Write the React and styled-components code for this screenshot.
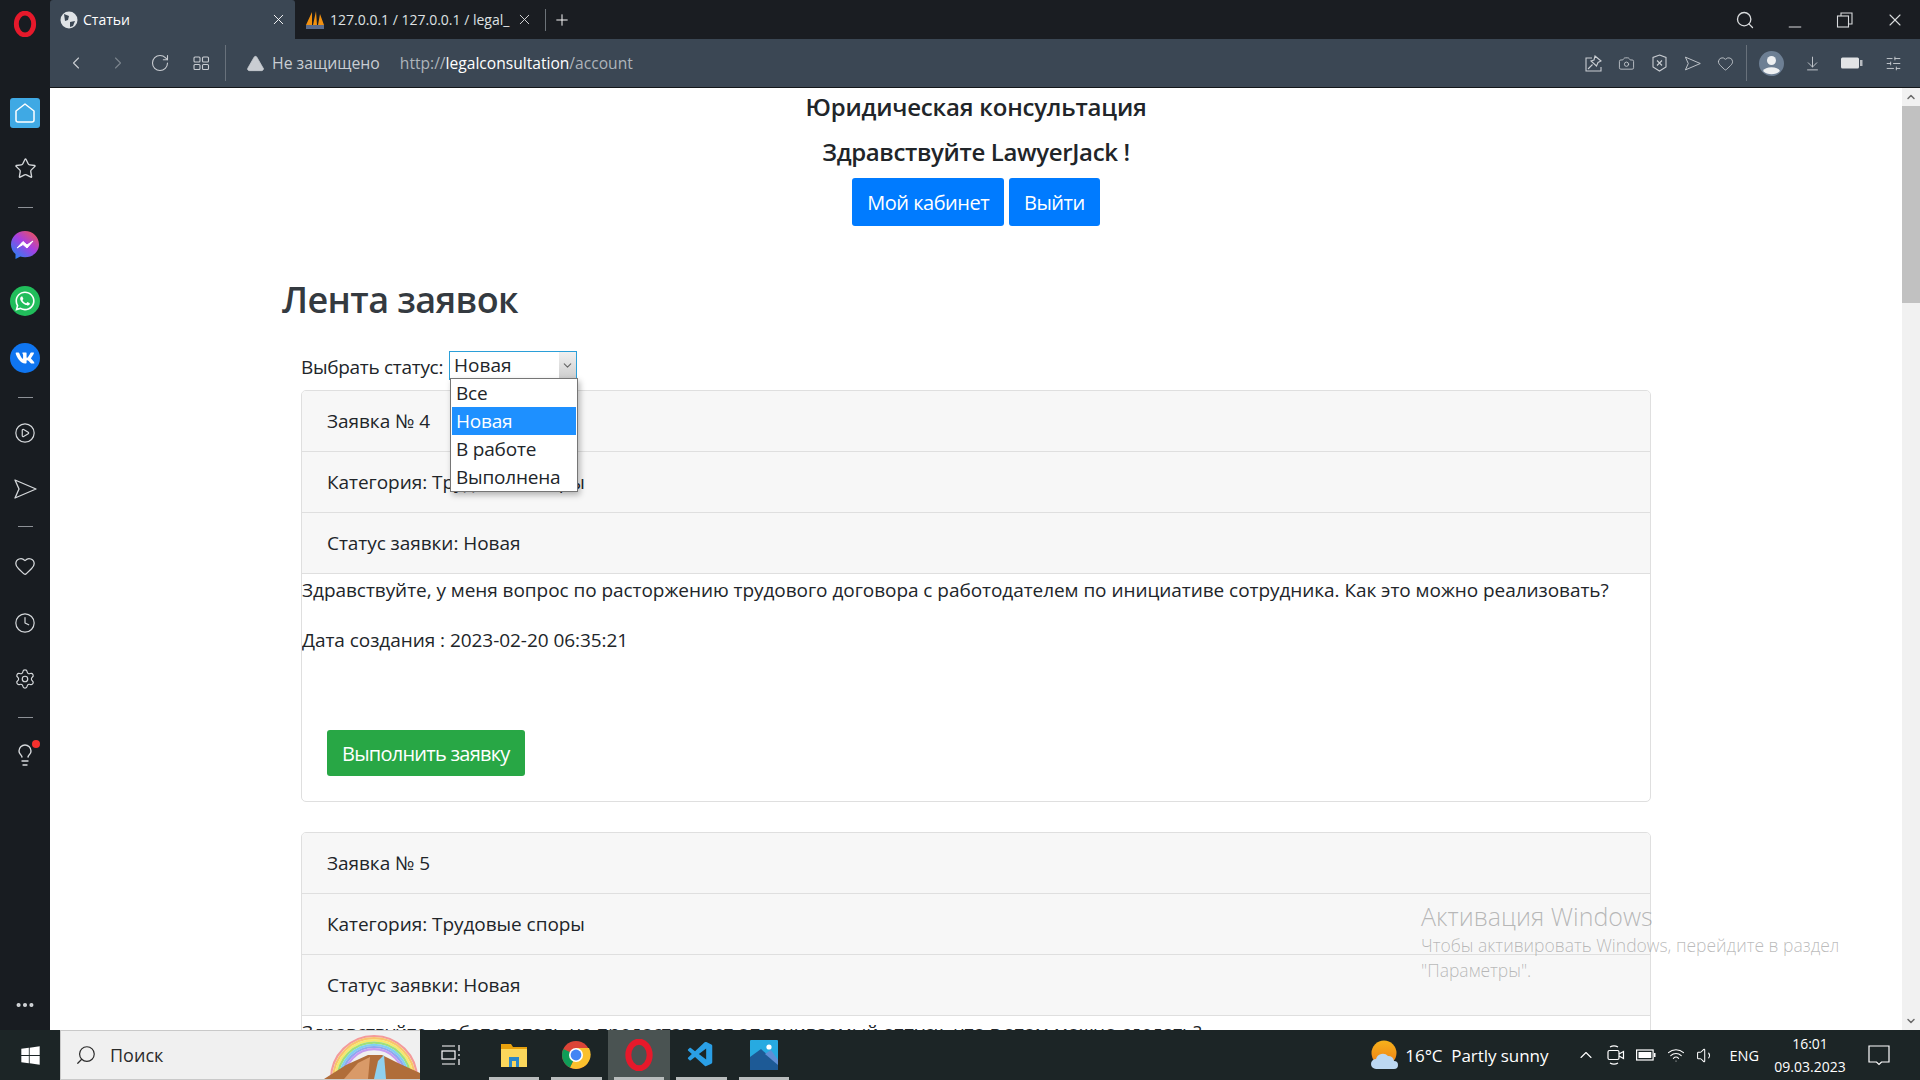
import { createGlobalStyle, styled } from 'styled-components';
import {
  ArrowDownToLine, Camera, ChevronDown, ChevronLeft, ChevronRight, ChevronUp, CirclePlay, Clock, Heart,
  Lightbulb, RotateCw, Search, Settings, SlidersHorizontal, Star, TriangleAlert, Volume1, Wifi, X, Plus,
  Minus, MoreHorizontal,
} from 'lucide-react';
import { FaVk, FaWhatsapp, FaWindows } from 'react-icons/fa';
import { VscVscode } from 'react-icons/vsc';

const GlobalStyle = createGlobalStyle`
  html, body { margin: 0; height: 100%; overflow: hidden; background: #fff; }
  * { box-sizing: border-box; }
  body { font-family: "Open Sans", "Noto Sans", "Liberation Sans", sans-serif; color: #212529; }
`;

const Screen = styled.div`
  width: 1920px;
  height: 1080px;
  display: flex;
  flex-direction: column;
  position: relative;
  overflow: hidden;
`;

const Browser = styled.div`
  height: 1030px;
  display: flex;
`;

const Sidebar = styled.aside`
  width: 50px;
  background: #181c21;
  display: flex;
  flex-direction: column;
  align-items: center;
  color: #d5d8db;
  padding-top: 11px;
`;

const SideItem = styled.div`
  width: 30px;
  height: 30px;
  margin-top: ${(p) => p.$top || 26}px;
  display: flex;
  align-items: center;
  justify-content: center;
  border-radius: ${(p) => (p.$round ? '50%' : '3px')};
  background: ${(p) => p.$bg || 'transparent'};
  color: ${(p) => p.$color || '#d5d8db'};
  position: relative;
`;

const SideRule = styled.div`
  width: 15px;
  height: 1px;
  background: #8d9197;
  margin-top: ${(p) => p.$top || 20}px;
`;

const Dot = styled.span`
  position: absolute;
  top: 0;
  right: 0;
  width: 8px;
  height: 8px;
  border-radius: 50%;
  background: #f6302d;
`;

const Main = styled.div`
  flex: 1;
  min-width: 0;
  display: flex;
  flex-direction: column;
`;

const TabStrip = styled.div`
  height: 39px;
  background: #1a1d22;
  display: flex;
  align-items: center;
  color: #fff;
`;

const Tab = styled.div`
  width: ${(p) => (p.$active ? 245 : 250)}px;
  height: 39px;
  display: flex;
  align-items: center;
  gap: 5px;
  padding: 0 ${(p) => (p.$active ? 8 : 12)}px 0 10px;
  font-size: 14px;
  white-space: nowrap;
  background: ${(p) => (p.$active ? '#3b4754' : 'transparent')};
  color: ${(p) => (p.$active ? '#fff' : '#dfe1e3')};
  border-radius: ${(p) => (p.$active ? '3px 3px 0 0' : '0')};
`;

const TabTitle = styled.span`
  flex: 1;
  min-width: 0;
  overflow: hidden;
`;

const NewTab = styled.div`
  height: 22px;
  border-left: 1px solid #6c7278;
  padding-left: 7px;
  display: flex;
  align-items: center;
`;

const WindowControls = styled.div`
  margin-left: auto;
  display: flex;
  align-items: center;
  gap: 30px;
  padding-right: 15px;
  color: #d9dbdd;
`;

const Toolbar = styled.div`
  height: 49px;
  background: #3b4754;
  border-bottom: 1px solid #14171a;
  display: flex;
  align-items: center;
  padding: 0 18px 0 16px;
  color: #c9cdd2;
`;

const NavGroup = styled.div`
  display: flex;
  align-items: center;
  gap: 22px;
  padding-right: 15px;
  height: 36px;
  border-right: 1px solid #68717b;
`;

const Security = styled.div`
  display: flex;
  align-items: center;
  gap: 7px;
  margin-left: 20px;
  font-size: 15.8px;
  color: #c9cdd2;
`;

const Url = styled.div`
  margin-left: 20px;
  font-size: 15.6px;
  color: #aeb4ba;
  b { font-weight: 400; color: #fff; }
`;

const ToolIcons = styled.div`
  margin-left: auto;
  display: flex;
  align-items: center;
  gap: 16px;
`;

const ToolRule = styled.div`
  width: 1px;
  height: 36px;
  margin: 0 -4px;
  background: #68717b;
`;

const AvatarWrap = styled.div`
  margin-right: 4px;
  display: flex;
`;

const BatteryWrap = styled.div`
  margin: 0 6px 0 4px;
  display: flex;
`;

const Viewport = styled.div`
  flex: 1;
  min-height: 0;
  display: flex;
`;

const Page = styled.main`
  flex: 1;
  min-width: 0;
  overflow: hidden;
  background: #fff;
  position: relative;
`;

const Masthead = styled.header`
  display: flex;
  flex-direction: column;
  align-items: center;
`;

const SiteTitle = styled.h4`
  margin: 0;
  height: 38px;
  line-height: 38px;
  font-size: 24px;
  font-weight: 600;
  letter-spacing: -0.2px;
`;

const Greeting = styled(SiteTitle)`
  margin-top: 7px;
  letter-spacing: -0.35px;
`;

const ButtonRow = styled.div`
  display: flex;
  gap: 5px;
  margin-top: 7px;
`;

const Btn = styled.div`
  height: ${(p) => (p.$green ? 46 : 48)}px;
  padding: 0 15px;
  display: flex;
  align-items: center;
  border-radius: 3px;
  font-size: 20px;
  letter-spacing: ${(p) => (p.$green ? -0.75 : -0.5)}px;
  color: #fff;
  background: ${(p) => (p.$green ? '#28a745' : '#007bff')};
  width: fit-content;
`;

const Content = styled.div`
  margin-left: 232px;
  width: 1368px;
`;

const PageTitle = styled.h2`
  margin: 46px 0 0;
  height: 56px;
  line-height: 56px;
  font-size: 36px;
  font-weight: 600;
  color: #343a40;
  letter-spacing: -0.6px;
`;

const Feed = styled.div`
  margin-left: 19px;
`;

const Filter = styled.div`
  margin-top: 22px;
  height: 34px;
  display: flex;
  align-items: center;
  gap: 6px;
  font-size: 19px;
  letter-spacing: -0.3px;
  position: relative;
`;

const SelectBox = styled.div`
  width: 128px;
  height: 29px;
  border: 1px solid #2b9fd8;
  display: flex;
  align-items: center;
  justify-content: space-between;
  padding-left: 4px;
  font-size: 19px;
  letter-spacing: 0;
  margin-top: -4px;
`;

const SelectArrow = styled.div`
  width: 17px;
  height: 27px;
  background: linear-gradient(#f0f0f0, #cdcdcd);
  color: #666;
  display: flex;
  align-items: center;
  justify-content: center;
`;

const Dropdown = styled.ul`
  position: absolute;
  z-index: 3;
  left: 149px;
  top: 28px;
  width: 128px;
  margin: 0;
  padding: 0 1px;
  list-style: none;
  background: #fff;
  border: 1px solid #767676;
  box-shadow: 2px 3px 6px rgba(0, 0, 0, 0.28);
`;

const Option = styled.li`
  height: 28px;
  line-height: 28px;
  padding-left: 4px;
  font-size: 19px;
  letter-spacing: -0.2px;
  background: ${(p) => (p.$selected ? '#1e90ff' : 'transparent')};
  color: ${(p) => (p.$selected ? '#fff' : '#212529')};
`;

const Card = styled.section`
  width: 1350px;
  height: 412px;
  margin-top: ${(p) => p.$top}px;
  border: 1px solid #dfdfdf;
  border-radius: 5px;
  overflow: hidden;
`;

const CardHeader = styled.div`
  height: 61px;
  padding: 0 25px;
  display: flex;
  align-items: center;
  background: #f7f7f7;
  border-bottom: 1px solid #dfdfdf;
  font-size: 19px;
  letter-spacing: -0.05px;
`;

const CardText = styled.p`
  margin: ${(p) => p.$top || 0}px 0 0;
  height: 30px;
  line-height: 30px;
  font-size: 19px;
  letter-spacing: -0.05px;
`;

const CardAction = styled.div`
  margin: 75px 0 0 25px;
`;

const Activation = styled.div`
  position: absolute;
  z-index: 4;
  left: 1371px;
  top: 811px;
  color: rgba(120, 120, 120, 0.5);
  font-size: 17.5px;
  line-height: 25px;
  font-weight: 300;
  white-space: nowrap;
  h5 {
    margin: 0;
    font-size: 25px;
    line-height: 34px;
    font-weight: 300;
  }
`;

const Scrollbar = styled.div`
  width: 18px;
  background: #f1f1f1;
  display: flex;
  flex-direction: column;
  align-items: center;
  color: #6b6b6b;
`;

const ScrollThumb = styled.div`
  width: 100%;
  height: 197px;
  background: #c1c1c1;
`;

const ScrollArrow = styled.div`
  height: 18px;
  display: flex;
  align-items: center;
  margin-top: ${(p) => (p.$end ? 'auto' : '0')};
`;

const Taskbar = styled.footer`
  height: 50px;
  background: #1c2526;
  display: flex;
  align-items: center;
  color: #fff;
`;

const StartBtn = styled.div`
  width: 60px;
  display: flex;
  justify-content: center;
`;

const SearchBox = styled.div`
  width: 360px;
  height: 50px;
  background: #f0f0f0;
  border: 1px solid #c9c9c9;
  border-right: 0;
  color: #2b2b2b;
  display: flex;
  align-items: center;
  gap: 13px;
  padding-left: 14px;
  font-size: 18px;
  position: relative;
  overflow: hidden;
`;

const SearchArt = styled.svg`
  position: absolute;
  right: 0;
  bottom: 0;
`;

const TaskIcons = styled.div`
  display: flex;
`;

const TaskIcon = styled.div`
  width: 62.5px;
  height: 50px;
  display: flex;
  align-items: center;
  justify-content: center;
  position: relative;
  background: ${(p) => (p.$active ? '#4a5352' : 'transparent')};
  &::after {
    content: '';
    display: ${(p) => (p.$running ? 'block' : 'none')};
    position: absolute;
    left: 6px;
    right: 6px;
    bottom: 0;
    height: 3px;
    background: #b9bdbd;
  }
`;

const Tray = styled.div`
  margin-left: auto;
  display: flex;
  align-items: center;
  height: 100%;
  padding-right: 11px;
`;

const Weather = styled.div`
  display: flex;
  align-items: center;
  gap: 6px;
  font-size: 17px;
  margin-right: 28px;
  letter-spacing: -0.05px;
  white-space: pre;
`;

const TrayIcons = styled.div`
  display: flex;
  align-items: center;
  gap: 11px;
`;

const Lang = styled.span`
  font-size: 14.5px;
  margin-left: 14px;
`;

const Clockface = styled.div`
  width: 76px;
  margin-left: 13px;
  text-align: center;
  font-size: 14px;
  line-height: 23px;
`;

const Notify = styled.div`
  width: 61px;
  height: 100%;
  display: flex;
  align-items: center;
  justify-content: center;
`;

const OperaLogo = ({ size = 24 }) => (
  <svg width={size} height={size} viewBox="0 0 24 24">
    <ellipse cx="12" cy="12" rx="8" ry="10" fill="none" stroke="#e6192b" strokeWidth="4.5" />
  </svg>
);

const MessengerLogo = () => (
  <svg width="30" height="30" viewBox="0 0 30 30">
    <defs>
      <linearGradient id="messenger" x1="0.9" y1="0" x2="0.1" y2="1">
        <stop offset="0" stopColor="#f2554f" />
        <stop offset="0.45" stopColor="#a83ee0" />
        <stop offset="1" stopColor="#1e86f5" />
      </linearGradient>
    </defs>
    <path d="M15 1 C7 1 1 7 1 14.5 C1 18.5 2.8 21.8 5.5 24 V29 L10.3 26.5 C11.8 27 13.4 27.3 15 27.3 C23 27.3 29 21.6 29 14.5 C29 7 23 1 15 1 Z" fill="url(#messenger)" />
    <path d="M7 18 L13 11.5 L17 15 L23 11 L17 18 L13 14.5 Z" fill="#fff" stroke="#fff" strokeWidth="1" strokeLinejoin="round" />
  </svg>
);

const ChromeLogo = () => (
  <svg width="30" height="30" viewBox="0 0 30 30">
    <circle cx="15" cy="15" r="14" fill="#db4437" />
    <path d="M15 15 L27 22 A14 14 0 0 1 9 27.6 Z" fill="#fbc02d" />
    <path d="M15 15 L9 27.6 A14 14 0 0 1 2.4 9 Z" fill="#0f9d58" />
    <path d="M15 8 H28 A14 14 0 0 1 22 27 L15 15 Z" fill="#fbc02d" />
    <circle cx="15" cy="15" r="7" fill="#fff" />
    <circle cx="15" cy="15" r="5.4" fill="#4285f4" />
  </svg>
);

const FolderLogo = () => (
  <svg width="30" height="30" viewBox="0 0 30 30">
    <path d="M2 4 H12 L14 7 H28 V27 H2 Z" fill="#e8a10c" />
    <rect x="2" y="9" width="26" height="18" fill="#fbd75b" />
    <path d="M10 17 H20 V27 H17 V21 H13 V27 H10 Z" fill="#2b87c8" />
  </svg>
);

const PhotosLogo = () => (
  <svg width="28" height="30" viewBox="0 0 28 30">
    <rect width="28" height="30" rx="1" fill="#27aae1" />
    <circle cx="19" cy="7" r="2.6" fill="#fff" />
    <path d="M0 30 V17 L11 9 L28 24 V30 Z" fill="#1d5a96" />
    <path d="M15 14 L21 10 L28 20 V25 Z" fill="#5f8fd6" />
  </svg>
);

const WeatherLogo = () => (
  <svg width="28" height="30" viewBox="0 0 28 30">
    <defs>
      <linearGradient id="sun" x1="0" y1="0" x2="0" y2="1">
        <stop offset="0" stopColor="#f6b21b" />
        <stop offset="1" stopColor="#ef7d16" />
      </linearGradient>
    </defs>
    <circle cx="13" cy="13" r="12.5" fill="url(#sun)" />
    <path d="M5 29 a5 5 0 0 1 0-10 a7 7 0 0 1 12-3 a6 6 0 0 1 6 5 a4 4 0 0 1 0 8 Z" fill="#bcd8f2" />
  </svg>
);

const PmaLogo = () => (
  <svg width="20" height="20" viewBox="0 0 20 20">
    <path d="M1 15 L7 2 L7 15 Z M8 15 L11 1 L12 15 Z M13 15 L15 4 L19 15 Z" fill="#f29111" />
    <rect x="1" y="15" width="18" height="4" fill="#5a6b8c" />
  </svg>
);

const RainbowArt = () => (
  <SearchArt width="96" height="48" viewBox="0 0 96 48">
    {['#f49a9a', '#f9c46b', '#f6e96b', '#9fe07a', '#7fd0ef', '#8ea8f0', '#c59cf0'].map((c, i) => (
      <path key={c} d={`M${7 + i * 2.2} 48 A${43 - i * 2.2} ${43 - i * 2.2} 0 0 1 ${93 - i * 2.2} 48`} fill="none" stroke={c} strokeWidth="2.2" />
    ))}
    <path d="M0 48 L22 34 L44 24 L58 24 L74 32 L96 42 V48 Z" fill="#b06d3a" />
    <path d="M20 48 L34 32 L46 26 L44 48 Z" fill="#d99a68" />
    <path d="M50 48 L54 30 L60 24 L62 48 Z" fill="#8fd0ee" />
  </SearchArt>
);

const HomeIcon = () => (
  <svg width="24" height="24" viewBox="0 0 24 24" fill="none" stroke="currentColor" strokeWidth="1.5" strokeLinejoin="round">
    <path d="M12 3 L21 10 V19 a2 2 0 0 1-2 2 H5 a2 2 0 0 1-2-2 V10 Z" />
  </svg>
);

const ArrowIcon = ({ size = 24 }) => (
  <svg width={size} height={size} viewBox="0 0 24 24" fill="none" stroke="currentColor" strokeWidth="1.3" strokeLinejoin="round">
    <path d="M2 3 L23 12 L2 21 L6 12 Z" />
  </svg>
);

const PinBoxIcon = () => (
  <svg width="17" height="17" viewBox="0 0 17 17" fill="none" stroke="currentColor" strokeWidth="1.1">
    <path d="M7 3 H1 V16 H16 V12" />
    <path d="M10 1 L16 6 L13 7.5 L11.5 11 L6 6 L9 5 Z" />
    <path d="M7.5 9.5 L3 14" />
  </svg>
);

const ShieldXIcon = () => (
  <svg width="17" height="18" viewBox="0 0 17 18" fill="none" stroke="currentColor" strokeWidth="1.1">
    <path d="M8.5 1 L15 3.5 V13 L8.5 17 L2 13 V3.5 Z" />
    <path d="M6 6.5 L11 11.5 M11 6.5 L6 11.5" />
  </svg>
);

const AvatarIcon = () => (
  <svg width="25" height="25" viewBox="0 0 25 25">
    <circle cx="12.5" cy="12.5" r="12.5" fill="#6d7f94" />
    <circle cx="12.5" cy="9.5" r="4.5" fill="#eef0f2" />
    <path d="M4 20 a9 5.5 0 0 1 17 0 a12.5 12.5 0 0 1-17 0 Z" fill="#eef0f2" />
  </svg>
);

const BatterySaver = () => (
  <svg width="22" height="12" viewBox="0 0 22 12">
    <rect width="18" height="11" rx="1.5" y="0.5" fill="#e2e4e6" />
    <rect x="19" y="3" width="2.5" height="6" fill="#b8bcc1" />
  </svg>
);

const TaskViewIcon = () => (
  <svg width="20" height="22" viewBox="0 0 20 22" fill="none" stroke="#fff" strokeWidth="1.2">
    <path d="M1 2 H14 M1 20 H14" />
    <rect x="1" y="7" width="13" height="8" />
    <path d="M18 1 V7 M18 10 V12 M18 15 V21" />
  </svg>
);

const TrayBattery = () => (
  <svg width="20" height="12" viewBox="0 0 20 12" fill="none" stroke="#fff" strokeWidth="1.2">
    <rect x="0.6" y="1" width="16.5" height="10" />
    <rect x="2.5" y="3" width="12.8" height="6" fill="#fff" stroke="none" />
    <rect x="18" y="4" width="1.5" height="4" fill="#fff" stroke="none" />
  </svg>
);

const MeetIcon = () => (
  <svg width="18" height="20" viewBox="0 0 18 20" fill="none" stroke="#fff" strokeWidth="1.2">
    <path d="M3 2 a8 8 0 0 1 8 0 M3 18 a8 8 0 0 0 8 0" />
    <rect x="1" y="5.5" width="11" height="9" rx="1.5" />
    <path d="M12 9 L16.5 6.5 V13.5 L12 11" />
  </svg>
);

const NoticeIcon = () => (
  <svg width="22" height="21" viewBox="0 0 22 21" fill="none" stroke="#fff" strokeWidth="1.2">
    <path d="M1 1 H21 V17 H13.5 L11 19.5 L8.5 17 H1 Z" />
  </svg>
);

const RestoreIcon = () => (
  <svg width="20" height="20" viewBox="0 0 20 20" fill="none" stroke="currentColor" strokeWidth="1.1">
    <rect x="2.5" y="6" width="11" height="11" />
    <path d="M6 6 V3 H17 V14 H13.5" />
  </svg>
);

const FourSquares = () => (
  <svg width="18" height="18" viewBox="0 0 18 18" fill="none" stroke="currentColor" strokeWidth="1.1">
    <rect x="2" y="3" width="6" height="5" rx="1" />
    <rect x="10.5" y="3" width="6" height="5" rx="1" />
    <rect x="2" y="10.5" width="6" height="5" rx="1" />
    <rect x="10.5" y="10.5" width="6" height="5" rx="1" />
  </svg>
);

const tickets = [
  {
    id: 4,
    category: 'Трудовые споры',
    status: 'Новая',
    text: 'Здравствуйте, у меня вопрос по расторжению трудового договора с работодателем по инициативе сотрудника. Как это можно реализовать?',
    date: '2023-02-20 06:35:21',
  },
  {
    id: 5,
    category: 'Трудовые споры',
    status: 'Новая',
    text: 'Здравствуйте, работодатель не предоставляет оплачиваемый отпуск, что в этом можно сделать?',
    date: '2023-02-20 06:40:02',
  },
];

const statusOptions = ['Все', 'Новая', 'В работе', 'Выполнена'];

function TicketCard({ ticket, first }) {
  return (
    <Card $top={first ? 6 : 30}>
      <CardHeader>Заявка № {ticket.id}</CardHeader>
      <CardHeader>Категория: {ticket.category}</CardHeader>
      <CardHeader>Статус заявки: {ticket.status}</CardHeader>
      <CardText $top={1}>{ticket.text}</CardText>
      <CardText $top={20}>Дата создания : {ticket.date}</CardText>
      <CardAction>
        <Btn $green>Выполнить заявку</Btn>
      </CardAction>
    </Card>
  );
}

export default function App() {
  return (
    <Screen>
      <GlobalStyle />
      <Browser>
        <Sidebar>
          <OperaLogo size={26} />
          <SideItem $top={61} $bg="#3fa9e4" $color="#fff"><HomeIcon /></SideItem>
          <SideItem $top={25}><Star size={23} strokeWidth={1.4} /></SideItem>
          <SideRule $top={24} />
          <SideItem $top={22}><MessengerLogo /></SideItem>
          <SideItem $top={26} $round $bg="#21bd5b" $color="#fff"><FaWhatsapp size={22} /></SideItem>
          <SideItem $top={27} $round $bg="#0f75f0" $color="#fff"><FaVk size={20} /></SideItem>
          <SideRule $top={24} />
          <SideItem $top={20}><CirclePlay size={22} strokeWidth={1.3} /></SideItem>
          <SideItem $top={26}><ArrowIcon /></SideItem>
          <SideRule $top={22} />
          <SideItem $top={24}><Heart size={22} strokeWidth={1.4} /></SideItem>
          <SideItem $top={27}><Clock size={22} strokeWidth={1.3} /></SideItem>
          <SideItem $top={26}><Settings size={22} strokeWidth={1.3} /></SideItem>
          <SideRule $top={23} />
          <SideItem $top={22}><Lightbulb size={24} strokeWidth={1.4} /><Dot /></SideItem>
          <SideItem $top={220}><MoreHorizontal size={22} strokeWidth={2.5} /></SideItem>
        </Sidebar>
        <Main>
          <TabStrip>
            <Tab $active>
              <svg width="18" height="18" viewBox="0 0 18 18"><circle cx="9" cy="9" r="8.5" fill="#dfe3e6" /><path d="M4 3 L9 5 L8 9 L5 10 Z M10 11 L15 10 L13 15 L10 16 Z" fill="#3b4754" /></svg>
              <TabTitle>Статьи</TabTitle>
              <X size={17} strokeWidth={1.3} />
            </Tab>
            <Tab>
              <PmaLogo />
              <TabTitle>127.0.0.1 / 127.0.0.1 / legal_</TabTitle>
              <X size={17} strokeWidth={1.3} />
            </Tab>
            <NewTab><Plus size={18} strokeWidth={1.3} /></NewTab>
            <WindowControls>
              <Search size={20} strokeWidth={1.6} />
              <Minus size={20} strokeWidth={1.2} style={{ marginTop: 14 }} />
              <RestoreIcon />
              <X size={20} strokeWidth={1.3} />
            </WindowControls>
          </TabStrip>
          <Toolbar>
            <NavGroup>
              <ChevronLeft size={20} strokeWidth={1.3} />
              <ChevronRight size={20} strokeWidth={1.3} color="#7b848d" />
              <RotateCw size={20} strokeWidth={1.3} />
              <FourSquares />
            </NavGroup>
            <Security>
              <TriangleAlert size={19} fill="#c9cdd2" color="#c9cdd2" strokeWidth={1} />
              Не защищено
            </Security>
            <Url>http://<b>legalconsultation</b>/account</Url>
            <ToolIcons>
              <PinBoxIcon />
              <Camera size={17} strokeWidth={1.2} />
              <ShieldXIcon />
              <ArrowIcon size={17} />
              <Heart size={17} strokeWidth={1.2} />
              <ToolRule />
              <AvatarWrap><AvatarIcon /></AvatarWrap>
              <ArrowDownToLine size={17} strokeWidth={1.3} />
              <BatteryWrap><BatterySaver /></BatteryWrap>
              <SlidersHorizontal size={17} strokeWidth={1.3} />
            </ToolIcons>
          </Toolbar>
          <Viewport>
            <Page>
              <Masthead>
                <SiteTitle>Юридическая консультация</SiteTitle>
                <Greeting>Здравствуйте LawyerJack !</Greeting>
                <ButtonRow>
                  <Btn>Мой кабинет</Btn>
                  <Btn>Выйти</Btn>
                </ButtonRow>
              </Masthead>
              <Content>
                <PageTitle>Лента заявок</PageTitle>
                <Feed>
                  <Filter>
                    Выбрать статус:
                    <SelectBox>
                      Новая
                      <SelectArrow><ChevronDown size={13} strokeWidth={2} /></SelectArrow>
                    </SelectBox>
                    <Dropdown>
                      {statusOptions.map((option) => (
                        <Option key={option} $selected={option === 'Новая'}>{option}</Option>
                      ))}
                    </Dropdown>
                  </Filter>
                  {tickets.map((ticket, i) => (
                    <TicketCard key={ticket.id} ticket={ticket} first={i === 0} />
                  ))}
                </Feed>
              </Content>
              <Activation>
                <h5>Активация Windows</h5>
                Чтобы активировать Windows, перейдите в раздел
                <br />
                "Параметры".
              </Activation>
            </Page>
            <Scrollbar>
              <ScrollArrow><ChevronUp size={12} strokeWidth={3} /></ScrollArrow>
              <ScrollThumb />
              <ScrollArrow $end><ChevronDown size={12} strokeWidth={3} /></ScrollArrow>
            </Scrollbar>
          </Viewport>
        </Main>
      </Browser>
      <Taskbar>
        <StartBtn><FaWindows size={21} /></StartBtn>
        <SearchBox>
          <Search size={22} strokeWidth={1.3} style={{ transform: 'scaleX(-1)' }} />
          Поиск
          <RainbowArt />
        </SearchBox>
        <TaskIcons>
          <TaskIcon><TaskViewIcon /></TaskIcon>
          <TaskIcon $running><FolderLogo /></TaskIcon>
          <TaskIcon $running><ChromeLogo /></TaskIcon>
          <TaskIcon $running $active><OperaLogo size={32} /></TaskIcon>
          <TaskIcon $running><VscVscode size={30} color="#2a9fe6" /></TaskIcon>
          <TaskIcon $running><PhotosLogo /></TaskIcon>
        </TaskIcons>
        <Tray>
          <Weather>
            <WeatherLogo />
            16°C  Partly sunny
          </Weather>
          <TrayIcons>
            <ChevronUp size={20} strokeWidth={1.3} />
            <MeetIcon />
            <TrayBattery />
            <Wifi size={18} strokeWidth={1.4} />
            <Volume1 size={19} strokeWidth={1.3} />
          </TrayIcons>
          <Lang>ENG</Lang>
          <Clockface>16:01<br />09.03.2023</Clockface>
          <Notify><NoticeIcon /></Notify>
        </Tray>
      </Taskbar>
    </Screen>
  );
}
